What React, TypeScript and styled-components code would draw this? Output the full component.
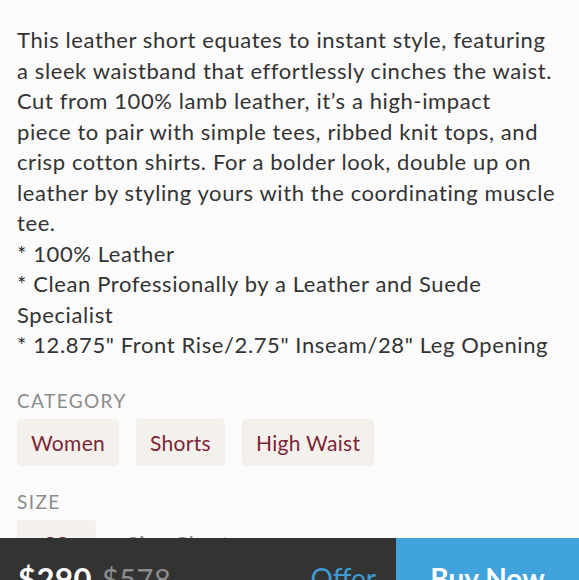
import React from "react";
import styled, { createGlobalStyle } from "styled-components";

const GlobalStyle = createGlobalStyle`
  html, body {
    margin: 0;
    padding: 0;
    background: #fbfbfb;
    font-family: "Lato", "Open Sans", sans-serif;
  }
`;

const Page = styled.div`
  padding: 25px 17px 120px 17px;
  color: #333333;
`;

const Description = styled.div`
  font-size: 22px;
  line-height: 30.5px;
  letter-spacing: 0.6px;
  white-space: pre;
`;

const Section = styled.div<{ $gap: number }>`
  margin-top: ${(p) => p.$gap}px;
`;

const Label = styled.div`
  font-size: 19px;
  letter-spacing: 1.4px;
  color: #8c8c8c;
  text-transform: uppercase;
  margin-bottom: 7px;
`;

const ChipRow = styled.div`
  display: flex;
  align-items: center;
  gap: 17px;
`;

const Chip = styled.div`
  background: #f4f1ed;
  color: #7b2535;
  font-size: 21px;
  letter-spacing: 0.3px;
  height: 47px;
  display: flex;
  align-items: center;
  padding: 0 14px;
  border-radius: 4px;
`;

const SizeChip = styled(Chip)`
  padding: 0 27px;
`;

const ChartLink = styled.span`
  color: #8c8c8c;
  font-size: 22px;
  letter-spacing: 0.5px;
  margin-left: 14px;
`;

const BottomBar = styled.div`
  position: fixed;
  left: 0;
  right: 0;
  bottom: -38px;
  height: 80px;
  display: flex;
`;

const PriceArea = styled.div`
  flex: 0 0 396px;
  background: #333333;
  display: flex;
  align-items: center;
  padding: 0 20px 0 18px;
  box-sizing: border-box;
`;

const Price = styled.span`
  color: #ffffff;
  font-size: 31px;
  font-weight: 700;
  letter-spacing: 0.5px;
`;

const OldPrice = styled.span`
  color: #8e8e8e;
  font-size: 29px;
  letter-spacing: 0.5px;
  margin-left: 10px;
`;

const Offer = styled.span`
  margin-left: auto;
  color: #3d9ad3;
  font-size: 28px;
`;

const BuyButton = styled.div`
  flex: 1;
  background: #40a3dc;
  color: #ffffff;
  font-size: 28px;
  font-weight: 700;
  display: flex;
  align-items: center;
  justify-content: center;
`;

const description = [
  "This leather short equates to instant style, featuring",
  "a sleek waistband that effortlessly cinches the waist.",
  "Cut from 100% lamb leather, it’s a high-impact",
  "piece to pair with simple tees, ribbed knit tops, and",
  "crisp cotton shirts. For a bolder look, double up on",
  "leather by styling yours with the coordinating muscle",
  "tee.",
  "* 100% Leather",
  "* Clean Professionally by a Leather and Suede",
  "Specialist",
  '* 12.875" Front Rise/2.75" Inseam/28" Leg Opening',
].join("\n");

const categories = ["Women", "Shorts", "High Waist"];

const App = () => {
  return (
    <>
      <GlobalStyle />
      <Page>
        <Description>{description}</Description>
        <Section $gap={28}>
          <Label>Category</Label>
          <ChipRow>
            {categories.map((c) => (
              <Chip key={c}>{c}</Chip>
            ))}
          </ChipRow>
        </Section>
        <Section $gap={24}>
          <Label>Size</Label>
          <ChipRow>
            <SizeChip>28</SizeChip>
            <ChartLink>Size Chart</ChartLink>
          </ChipRow>
        </Section>
      </Page>
      <BottomBar>
        <PriceArea>
          <Price>$290</Price>
          <OldPrice>$578</OldPrice>
          <Offer>Offer</Offer>
        </PriceArea>
        <BuyButton>Buy Now</BuyButton>
      </BottomBar>
    </>
  );
};

export default App;
